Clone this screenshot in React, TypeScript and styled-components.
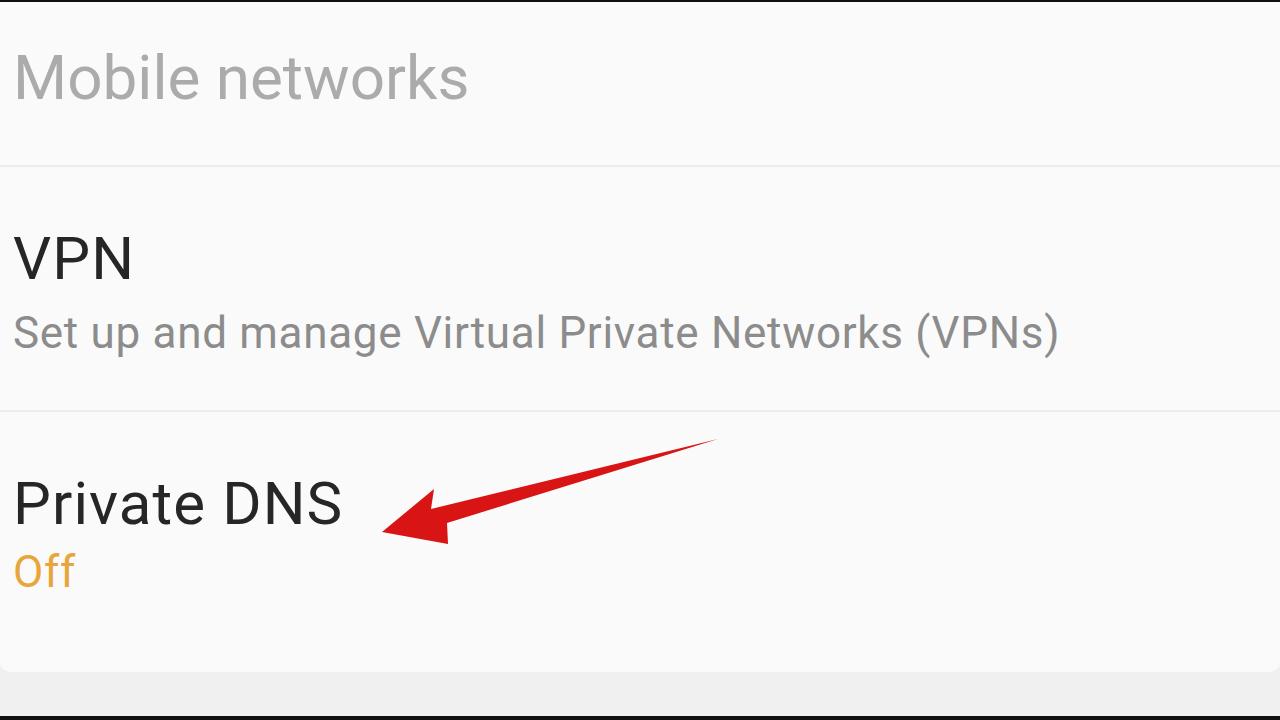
import styled, { createGlobalStyle } from "styled-components"

const GlobalStyle = createGlobalStyle`
  html, body {
    margin: 0;
    padding: 0;
    background: #000;
  }
  body {
    font-family: Roboto, "Noto Sans", sans-serif;
  }
`

interface RowProps {
  title: string
  subtitle?: string
  accent?: boolean
  muted?: boolean
  divider?: boolean
}

const SettingRow = ({ title, subtitle, accent, muted, divider }: RowProps) => (
  <Row $divider={divider} $hasSub={!!subtitle}>
    <Title $muted={muted}>{title}</Title>
    {subtitle && <Subtitle $accent={accent}>{subtitle}</Subtitle>}
  </Row>
)

export default function App() {
  return (
    <>
      <GlobalStyle />
      <Screen>
        <Card>
          <SettingRow title="Mobile networks" muted divider />
          <SettingRow
            title="VPN"
            subtitle="Set up and manage Virtual Private Networks (VPNs)"
            divider
          />
          <LastRow>
            <SettingRow title="Private DNS" subtitle="Off" accent />
            <Arrow viewBox="0 0 1280 720" aria-hidden>
              <path
                d="M382 530 L434 487 L431 507 L718 437 L447 521 L448 542 Z"
                fill="#d81414"
              />
            </Arrow>
          </LastRow>
        </Card>
        <Footer />
      </Screen>
    </>
  )
}

const Screen = styled.div`
  width: 1280px;
  height: 720px;
  padding: 2px 0 4px;
  box-sizing: border-box;
  background: #f0f0f0;
  display: flex;
  flex-direction: column;
  overflow: hidden;
  box-shadow: inset 0 2px 0 #111, inset 0 -4px 0 #111;
`

const Card = styled.div`
  background: #fafafa;
  border-radius: 0 0 10px 10px;
  display: flex;
  flex-direction: column;
  height: 670px;
`

const Row = styled.div<{ $divider?: boolean; $hasSub: boolean }>`
  display: flex;
  flex-direction: column;
  padding: ${({ $hasSub }) => ($hasSub ? "62px" : "45px")} 0 0 13px;
  height: ${({ $hasSub }) => ($hasSub ? "181px" : "118px")};
  border-bottom: ${({ $divider }) => ($divider ? "2px solid #ececec" : "none")};
`

const LastRow = styled.div`
  position: relative;
  flex: 1;
`

const Title = styled.div<{ $muted?: boolean }>`
  font-size: ${({ $muted }) => ($muted ? "62px" : "60px")};
  letter-spacing: ${({ $muted }) => ($muted ? "0" : "1.1px")};
  line-height: 1;
  color: ${({ $muted }) => ($muted ? "#ababab" : "#262626")};
  white-space: nowrap;
`

const Subtitle = styled.div<{ $accent?: boolean }>`
  margin-top: ${({ $accent }) => ($accent ? "16px" : "22px")};
  font-size: 44px;
  letter-spacing: 0.7px;
  line-height: 1;
  color: ${({ $accent }) => ($accent ? "#e9a53a" : "#8c8c8c")};
  white-space: nowrap;
`

const Arrow = styled.svg`
  position: absolute;
  left: 0;
  top: -410px;
  width: 1280px;
  height: 720px;
  pointer-events: none;
`

const Footer = styled.div`
  flex: 1;
`
